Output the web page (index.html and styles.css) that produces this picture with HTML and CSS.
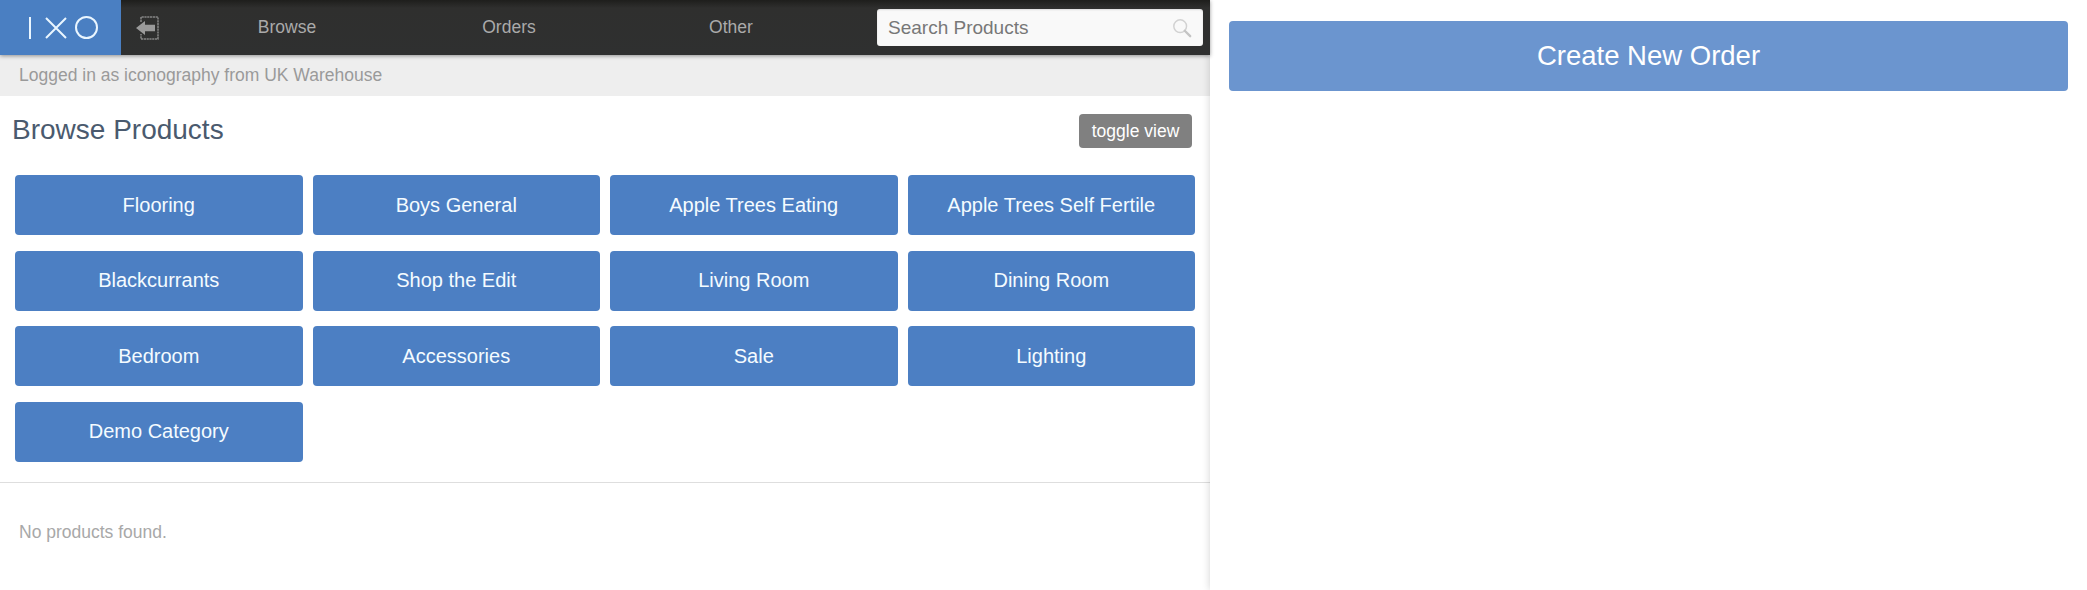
FILE: index.html
```html
<!DOCTYPE html>
<html lang="en">
<head>
<meta charset="utf-8">
<title>Browse Products</title>
<link rel="stylesheet" href="styles.css">
</head>
<body>
<div class="app">
  <main class="left">
    <header class="nav">
      <a class="logo"><span class="logo-i"></span><svg class="logo-x" viewBox="0 0 22 22"><path d="M1 1 21 21M21 1 1 21" fill="none" stroke="#eaf6ff" stroke-width="2"/></svg><span class="logo-o"></span></a>
      <a class="logout">
        <svg viewBox="0 0 23 24" width="23" height="24"><path d="M5 6V1H22V23H5V18" fill="none" stroke="#858585" stroke-width="1.500" stroke-dasharray="2.200 .6"/><path d="M0 12 9 5V8.800H19V15.200H9V19Z" fill="#9a9a9a"/></svg>
      </a>
      <nav class="menu">
        <a>Browse</a>
        <a>Orders</a>
        <a>Other</a>
      </nav>
      <div class="search">
        <span>Search Products</span>
        <svg viewBox="0 0 22 22" width="20" height="20"><circle cx="9" cy="9" r="7" fill="none" stroke="#d2d2d2" stroke-width="1.600"/><path d="M14 14 20 20" stroke="#c4c4c4" stroke-width="2.600" stroke-linecap="round"/></svg>
      </div>
    </header>
    <div class="status">Logged in as iconography from UK Warehouse</div>
    <div class="title-row">
      <h1>Browse Products</h1>
      <button class="toggle">toggle view</button>
    </div>
    <div class="grid">
      <a class="cat">Flooring</a>
      <a class="cat">Boys General</a>
      <a class="cat">Apple Trees Eating</a>
      <a class="cat">Apple Trees Self Fertile</a>
      <a class="cat">Blackcurrants</a>
      <a class="cat">Shop the Edit</a>
      <a class="cat">Living Room</a>
      <a class="cat">Dining Room</a>
      <a class="cat">Bedroom</a>
      <a class="cat">Accessories</a>
      <a class="cat">Sale</a>
      <a class="cat">Lighting</a>
      <a class="cat">Demo Category</a>
    </div>
    <p class="empty">No products found.</p>
  </main>
  <aside class="right">
    <button class="create">Create New Order</button>
  </aside>
</div>
</body>
</html>
```
FILE: styles.css
```css
* { box-sizing: border-box; }
html, body { margin: 0; height: 100%; background: #fff; overflow: hidden; }
body { font-family: "Liberation Sans", Arial, sans-serif; }
.app { display: flex; height: 590px; }
.left { width: 1210px; flex: none; }
.right { flex: 1; padding: 21px 19px 0 19px; box-shadow: 0 0 8px rgba(0,0,0,.18); }
.nav {
  height: 55px; display: flex; align-items: center;
  background: linear-gradient(#1e1e1c 0, #2f2f2e 8px, #2f3030 100%);
  box-shadow: 0 1px 4px rgba(0,0,0,.4); position: relative;
}
.logo { width: 121px; height: 55px; background: #4a7fc2; display: flex; align-items: center; padding-left: 29px; flex: none; }
.logo-i { width: 2px; height: 22px; background: #eaf6ff; }
.logo-x { width: 22px; height: 22px; margin-left: 14px; }
.logo-o { width: 23px; height: 23px; border: 2px solid #eaf6ff; border-radius: 50%; margin-left: 8px; }
.logout { width: 23px; height: 24px; margin-left: 15px; flex: none; }
.logout svg { display: block; }
.menu { width: 666px; display: flex; margin-left: 17px; flex: none; }
.menu a { width: 222px; text-align: center; color: #aaaaaa; font-size: 17.500px; }
.search {
  width: 326px; height: 37px; margin-left: 35px; background: #f9f9f9; border-radius: 3px;
  display: flex; align-items: center; justify-content: space-between; padding: 0 11px; flex: none;
  color: #777; font-size: 19px; box-shadow: inset 0 1px 2px rgba(0,0,0,.12);
}
.status { height: 41px; background: #eeeeee; color: #9a9a9a; font-size: 17.500px; line-height: 41px; padding: 0 19px; }
.title-row { height: 79px; display: flex; align-items: center; justify-content: space-between; padding: 0 18px 9px 12px; }
h1 { margin: 0 0 3px; font-size: 28px; font-weight: 400; color: #4a5a6e; }
.toggle {
  width: 113px; height: 34px; border: 0; border-radius: 4px; background: #808080; color: #fff;
  font-family: inherit; font-size: 17.500px; padding: 0;
}
.grid {
  display: grid; grid-template-columns: repeat(4, 287.500px); column-gap: 10px; row-gap: 15.500px;
  padding: 0 15px 20px; border-bottom: 1px solid #dedede;
}
.cat {
  height: 60px; background: #4c7fc3; color: #f4fbff; border-radius: 4px;
  display: flex; align-items: center; justify-content: center; font-size: 20px;
}
.empty { margin: 0; padding: 38px 19px 0; color: #a8a8a8; font-size: 17.500px; line-height: 22px; }
.create {
  width: 100%; height: 70px; border: 0; border-radius: 4px; background: #6b95cf; color: #fff;
  font-family: inherit; font-size: 27.500px; padding: 0;
}
```
